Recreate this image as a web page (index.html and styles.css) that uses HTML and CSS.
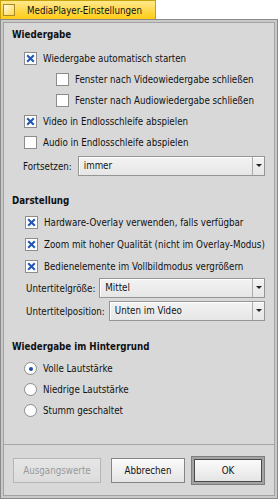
FILE: index.html
```html
<!DOCTYPE html>
<html lang="de">
<head>
    <meta charset="UTF-8">
    <meta name="viewport" content="width=device-width, initial-scale=1.0">
    <title>MediaPlayer-Einstellungen</title>
    <link rel="stylesheet" href="styles.css">
</head>
<body>
    <div class="tab">
        <span class="close"></span>
        <span class="title">MediaPlayer-Einstellungen</span>
    </div>
    <div class="window">
        <div class="panel">
            <div class="content">
                <h2 class="heading">Wiedergabe</h2>
                <div class="check first">
                    <span class="box"><svg viewBox="0 0 10 10"><path d="M2 2 L8 8 M8 2 L2 8"/></svg></span>
                    Wiedergabe automatisch starten
                </div>
                <div class="check sub">
                    <span class="box"></span>
                    Fenster nach Videowiedergabe schließen
                </div>
                <div class="check sub">
                    <span class="box"></span>
                    Fenster nach Audiowiedergabe schließen
                </div>
                <div class="check">
                    <span class="box"><svg viewBox="0 0 10 10"><path d="M2 2 L8 8 M8 2 L2 8"/></svg></span>
                    Video in Endlosschleife abspielen
                </div>
                <div class="check">
                    <span class="box"></span>
                    Audio in Endlosschleife abspielen
                </div>
                <div class="field resume">
                    <span class="field-label">Fortsetzen:</span>
                    <div class="select"><span class="value">immer</span><span class="arrow"></span></div>
                </div>

                <h2 class="heading second">Darstellung</h2>
                <div class="check wide">
                    <span class="box"><svg viewBox="0 0 10 10"><path d="M2 2 L8 8 M8 2 L2 8"/></svg></span>
                    Hardware-Overlay verwenden, falls verfügbar
                </div>
                <div class="check wide">
                    <span class="box"><svg viewBox="0 0 10 10"><path d="M2 2 L8 8 M8 2 L2 8"/></svg></span>
                    Zoom mit hoher Qualität (nicht im Overlay-Modus)
                </div>
                <div class="check wide">
                    <span class="box"><svg viewBox="0 0 10 10"><path d="M2 2 L8 8 M8 2 L2 8"/></svg></span>
                    Bedienelemente im Vollbildmodus vergrößern
                </div>
                <div class="field sub-size">
                    <span class="field-label">Untertitelgröße:</span>
                    <div class="select"><span class="value">Mittel</span><span class="arrow"></span></div>
                </div>
                <div class="field sub-pos">
                    <span class="field-label">Untertitelposition:</span>
                    <div class="select"><span class="value">Unten im Video</span><span class="arrow"></span></div>
                </div>

                <h2 class="heading third">Wiedergabe im Hintergrund</h2>
                <div class="radio first">
                    <span class="circle on"></span>
                    Volle Lautstärke
                </div>
                <div class="radio">
                    <span class="circle"></span>
                    Niedrige Lautstärke
                </div>
                <div class="radio">
                    <span class="circle"></span>
                    Stumm geschaltet
                </div>
            </div>
            <div class="buttons">
                <button class="btn disabled">Ausgangswerte</button>
                <div class="right">
                    <button class="btn">Abbrechen</button>
                    <div class="default"><button class="btn">OK</button></div>
                </div>
            </div>
        </div>
    </div>
</body>
</html>
```

FILE: styles.css
```css
* {
    padding: 0;
    margin: 0;
    box-sizing: border-box;
}
body {
    width: 278px;
    height: 499px;
    background-color: #fff;
    font-family: "DejaVu Sans Condensed", "DejaVu Sans", "Noto Sans", sans-serif;
    font-size: 9.7px;
    color: #111;
    white-space: nowrap;
}
.tab {
    width: 156px;
    height: 19px;
    display: flex;
    align-items: center;
    padding-left: 2px;
    background: linear-gradient(#ffe98c, #ffcb14);
    border: 1px solid #c9a30a;
    border-bottom: none;
}
.close {
    width: 12px;
    height: 12px;
    border: 1px solid #a88c2c;
    background: linear-gradient(135deg, #fffbe6, #ffd84a);
}
.title {
    margin-left: 12px;
    font-size: 9.7px;
}
.window {
    height: 480px;
    border: 1px solid #8a8a8a;
    background-color: #c9c9c9;
    padding: 2px;
}
.panel {
    height: 100%;
    border: 1px solid #a2a2a2;
    background-color: #d8d8d8;
    display: flex;
    flex-direction: column;
}
.content {
    flex: 1;
    padding: 5px 9px 0 8px;
}
.heading {
    font-size: 9.7px;
    font-weight: bold;
    height: 14px;
    line-height: 14px;
    margin-bottom: 5px;
}
.heading.second {
    margin-top: 18px;
    margin-bottom: 3px;
}
.heading.third {
    margin-top: 19px;
    margin-bottom: 4px;
}
.check, .radio {
    display: flex;
    align-items: center;
    gap: 6px;
    height: 21px;
    padding-left: 12px;
}
.check.first {
    height: 22px;
}
.check.wide {
    height: 22px;
    padding-left: 13px;
}
.check.sub {
    padding-left: 44px;
}
.box {
    width: 13px;
    height: 13px;
    flex: none;
    border: 1px solid #8c8c8c;
    background-color: #fff;
    display: flex;
    align-items: center;
    justify-content: center;
}
.box svg {
    width: 11px;
    height: 11px;
}
.box path {
    stroke: #2257b6;
    stroke-width: 1.9;
    fill: none;
}
.circle {
    width: 13px;
    height: 13px;
    flex: none;
    border: 1px solid #8c8c8c;
    border-radius: 50%;
    background-color: #fff;
    display: flex;
    align-items: center;
    justify-content: center;
}
.circle.on::after {
    content: "";
    width: 4px;
    height: 4px;
    border-radius: 50%;
    background-color: #1f4fa8;
}
.field {
    display: flex;
    align-items: center;
    gap: 6px;
    height: 20px;
    padding-left: 11px;
}
.field.resume {
    margin-top: 3px;
}
.field.sub-size {
    margin-top: 1px;
    padding-left: 14px;
    gap: 4px;
}
.field.sub-pos {
    margin-top: 3px;
    padding-left: 14px;
    gap: 4px;
}
.select {
    flex: 1;
    height: 20px;
    display: flex;
    border: 1px solid #959595;
    background: linear-gradient(#f3f3f3, #e6e6e6);
    box-shadow: inset 1px 1px #fff;
}
.value {
    flex: 1;
    padding-left: 5px;
    line-height: 18px;
}
.arrow {
    width: 12px;
    border-left: 1px solid #ababab;
    display: flex;
    align-items: center;
    justify-content: center;
}
.arrow::after {
    content: "";
    border-left: 3px solid transparent;
    border-right: 3px solid transparent;
    border-top: 3px solid #222;
    margin-top: -2px;
}
.buttons {
    height: 51px;
    border-top: 1px solid #a6a6a6;
    display: flex;
    align-items: center;
    justify-content: space-between;
    padding: 0 9px;
}
.right {
    display: flex;
    align-items: center;
    gap: 6px;
}
.btn {
    width: 74px;
    height: 25px;
    font-family: inherit;
    font-size: 9.7px;
    color: #111;
    border: 1px solid #858585;
    background: linear-gradient(#fbfbfb, #e4e4e4);
}
.btn.disabled {
    width: 88px;
    color: #999;
    border-color: #b6b6b6;
    background: linear-gradient(#e6e6e6, #dcdcdc);
}
.default {
    width: 74px;
    height: 29px;
    border: 1px solid #7e7e7e;
    background-color: #a3a3a3;
    padding: 2px;
}
.default .btn {
    width: 100%;
    height: 100%;
    border-color: #4a4a4a;
}
```
